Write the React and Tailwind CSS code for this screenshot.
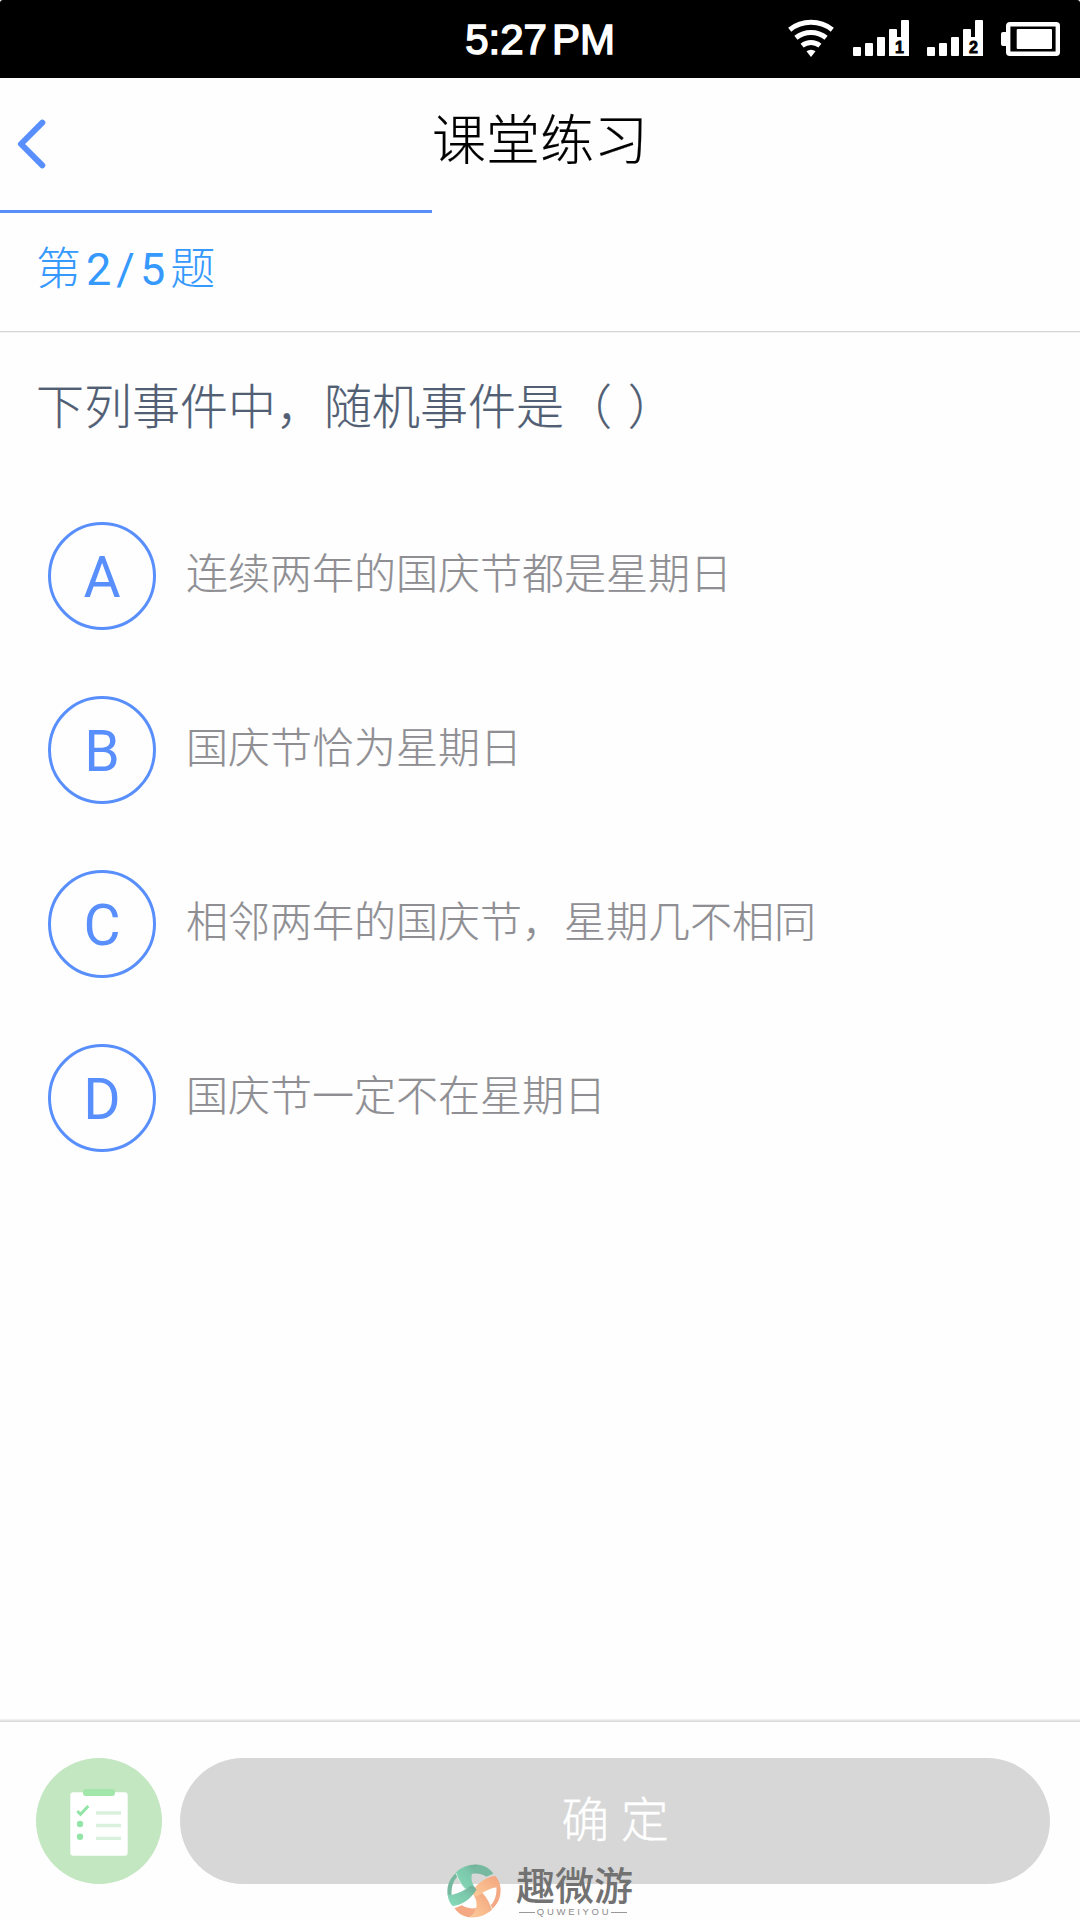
import clsx from 'clsx';

const options = [
  { key: 'A', text: '连续两年的国庆节都是星期日' },
  { key: 'B', text: '国庆节恰为星期日' },
  { key: 'C', text: '相邻两年的国庆节，星期几不相同' },
  { key: 'D', text: '国庆节一定不在星期日' },
];

const question = {
  current: 2,
  total: 5,
  title: '下列事件中，随机事件是（ ）',
};

const WifiIcon = () => (
  <svg className="h-[39px] w-12" viewBox="0 0 48 39" fill="none" aria-hidden="true">
    <g stroke="#fff" strokeWidth="5">
      <path d="M2.7 10.7a34.5 34.5 0 0 1 42.6 0" />
      <path d="M8.9 18.7a24.5 24.5 0 0 1 30.2 0" />
      <path d="M15.1 26.6a14.5 14.5 0 0 1 17.8 0" />
    </g>
    <path d="M19.5 32.3a7 7 0 0 1 9 0L24 38z" fill="#fff" />
  </svg>
);

const SignalIcon = ({ sim }) => (
  <svg className="h-9 w-14" viewBox="0 0 56 36" fill="#fff" aria-hidden="true">
    <rect x="0" y="27" width="8" height="9" rx="1" />
    <rect x="12" y="23" width="8" height="13" rx="1" />
    <rect x="24" y="17" width="8" height="19" rx="1" />
    <rect x="36" y="9" width="8" height="27" rx="1" />
    <rect x="36" y="17" width="20" height="19" />
    <rect x="48" y="0" width="8" height="36" rx="1" />
    <text
      x="46.5"
      y="33.2"
      textAnchor="middle"
      fill="#000"
      stroke="#000"
      strokeWidth="0.8"
      className="font-['Liberation_Sans'] text-[16px] font-bold"
    >
      {sim}
    </text>
  </svg>
);

const BatteryIcon = () => (
  <svg className="h-[34px] w-[59px]" viewBox="0 0 59 34" aria-hidden="true">
    <rect x="0" y="10" width="8" height="14" rx="2" fill="#fff" />
    <rect x="7.2" y="2.2" width="49.6" height="29.6" rx="1.5" fill="#000" stroke="#fff" strokeWidth="4.4" />
    <rect x="15.7" y="7" width="35.3" height="20" rx="1" fill="#fff" />
  </svg>
);

const ClipboardIcon = () => (
  <svg className="mt-[3px] h-[67px] w-[58px]" viewBox="0 0 58 67" fill="none" aria-hidden="true">
    <rect x="0.3" y="3.3" width="57.4" height="63.4" rx="3" fill="#fff" />
    <rect x="13" y="0" width="32" height="7" rx="3" fill="#a3e6aa" />
    <path d="m7.3 22 3.2 3.3 7.8-8.3" stroke="#93e5a7" strokeWidth="3" />
    <circle cx="10" cy="35" r="3.2" fill="#93e5a7" />
    <circle cx="10" cy="47.7" r="3.2" fill="#93e5a7" />
    <path d="M26 24h25M26 36.5h25M26 49.3h25" stroke="#d9f1dc" strokeWidth="3.3" />
  </svg>
);

const StatusBar = () => (
  <div className="relative flex h-[78px] shrink-0 items-start justify-end rounded-t-[3px] bg-black pr-5">
    <span className="absolute inset-x-0 top-[15px] text-center font-['Liberation_Sans'] text-[42px] leading-[50px] text-white [-webkit-text-stroke:1.5px_#fff]">
      5:27<span className="ml-[5px]">PM</span>
    </span>
    <div className="mt-[19px]">
      <WifiIcon />
    </div>
    <div className="mt-5 ml-[18px] flex gap-[18px]">
      <SignalIcon sim="1" />
      <SignalIcon sim="2" />
    </div>
    <div className="mt-[22px] ml-[18px]">
      <BatteryIcon />
    </div>
  </div>
);

const Option = ({ label, text }) => (
  <li className="flex h-[108px] items-center">
    <span className="flex size-[108px] shrink-0 items-center justify-center rounded-full border-3 border-[#588ffc] pt-[3px] text-[57px] leading-none text-[#588ffc]">
      {label}
    </span>
    <span className="-mt-[2px] ml-[30px] text-[42px] leading-[60px] font-light text-[#8e8e93] [-webkit-text-stroke:0.2px]">
      {text}
    </span>
  </li>
);

/* One half of the mark; the other is the same shape turned by 180 degrees */
const LogoHalf = ({ fill, arc, transform }) => (
  <g transform={transform}>
    <path d="M27 27C8 42-2 67 2 94L14 98C12 72 17 52 31 38Z" fill={arc} />
    <path d="M94 2C113 4 129 13 139 29L118 38C105 30 89 27 75 30C75 19 82 9 94 2Z" fill={arc} />
    <path d="M94 2C72-1 45 7 26 26C33 44 42 61 55 75L82 68C68 47 70 22 94 2Z" fill={fill} />
    <path d="M2 92C24 95 52 79 72 65Q84 66 88 77C71 106 44 123 17 126C8 117 3 104 2 92Z" fill={fill} />
    <path d="M27 27C34 47 42 63 55 75" fill="none" stroke="#f2f5f2" strokeWidth="2" />
  </g>
);

/* Site mark laid over the bottom edge of the page */
const Watermark = () => (
  <div className="absolute top-[1863px] left-[447px] flex">
    <svg className="mt-px size-[54px]" viewBox="0 0 162 162" aria-hidden="true">
      <defs>
        <linearGradient id="teal" x1="0" y1="1" x2="1" y2="0">
          <stop offset="0" stopColor="#84dbb9" />
          <stop offset="0.6" stopColor="#7cc8ac" />
          <stop offset="1" stopColor="#6fa893" />
        </linearGradient>
        <linearGradient id="orange" x1="0" y1="1" x2="1" y2="0">
          <stop offset="0" stopColor="#f3a17c" />
          <stop offset="0.6" stopColor="#f9bd8f" />
          <stop offset="1" stopColor="#fbc99a" />
        </linearGradient>
      </defs>
      <LogoHalf fill="url(#orange)" arc="#f4a984" transform="rotate(180 81 81)" />
      <LogoHalf fill="url(#teal)" arc="#77b9a0" />
    </svg>
    <div className="ml-[15px] flex flex-col items-center text-[#727272]">
      <span className="mt-[2px] text-[39px] leading-[44px] font-medium">趣微游</span>
      <span className="-mt-[2px] -ml-[3px] flex items-center font-['Liberation_Sans'] text-[9.5px] leading-[10px] tracking-[2.7px] text-[#8c8c8c]">
        <i className="h-px w-4 bg-[#999]" />
        <b className="ml-[2px] font-normal">QUWEIYOU</b>
        <i className="h-px w-4 bg-[#999]" />
      </span>
    </div>
  </div>
);

export default function App() {
  return (
    <div className="relative flex h-[1920px] w-[1080px] flex-col overflow-hidden bg-[#fefefe] font-[Roboto,'Noto_Sans_CJK_SC',sans-serif]">
      <StatusBar />

      <header className="grid h-[132px] shrink-0 grid-cols-3 items-center">
        <svg className="ml-[17px] h-[50px] w-[30px]" viewBox="0 0 30 50" fill="none" aria-label="返回">
          <path
            d="M25.3 3.7 4 25l21.3 21.3"
            stroke="#588ffc"
            strokeWidth="6"
            strokeLinecap="round"
            strokeLinejoin="round"
          />
        </svg>
        <h1 className="-mt-1 text-center text-[54px] leading-[80px] font-light text-black [-webkit-text-stroke:0.2px]">
          课堂练习
        </h1>
      </header>

      {/* Progress through the exercise */}
      <div className="h-[3px] shrink-0">
        <div
          className="h-full bg-[#588ffc]"
          style={{ width: `${(question.current / question.total) * 100}%` }}
        />
      </div>

      <div className="flex h-[119px] shrink-0 items-center border-b border-[#d6d6d6] pb-1 pl-9 text-[45px] font-light tracking-[5px] text-[#3599fe] shadow-[0_1px_0_#f2f2f2]">
        <span>
          第<span className="font-normal">{question.current}/{question.total}</span>题
        </span>
      </div>

      <main className="flex-1">
        <h2 className="mt-10 pl-9 text-[48px] leading-[72px] font-light [word-spacing:4px] text-[#515e74] [-webkit-text-stroke:0.2px]">
          {question.title}
        </h2>
        <ul className="mt-[78px] flex flex-col gap-[66px] pl-12">
          {options.map((option) => (
            <Option key={option.key} label={option.key} text={option.text} />
          ))}
        </ul>
      </main>

      <div className="h-[3px] shrink-0 bg-linear-to-b from-[#f6f6f6] to-[#d4d4d4]" />
      <footer className="flex h-[198px] shrink-0 gap-[18px] pt-9 pr-[30px] pl-9">
        <button
          className="flex size-[126px] items-center justify-center rounded-full bg-[#c3e7c1]"
          aria-label="答题卡"
        >
          <ClipboardIcon />
        </button>
        <button
          className={clsx(
            'h-[126px] flex-1 rounded-full bg-[#d7d7d7] pb-px',
            'text-[48px] font-light text-white [-webkit-text-stroke:0.3px]'
          )}
        >
          确 定
        </button>
      </footer>

      <Watermark />
    </div>
  );
}
